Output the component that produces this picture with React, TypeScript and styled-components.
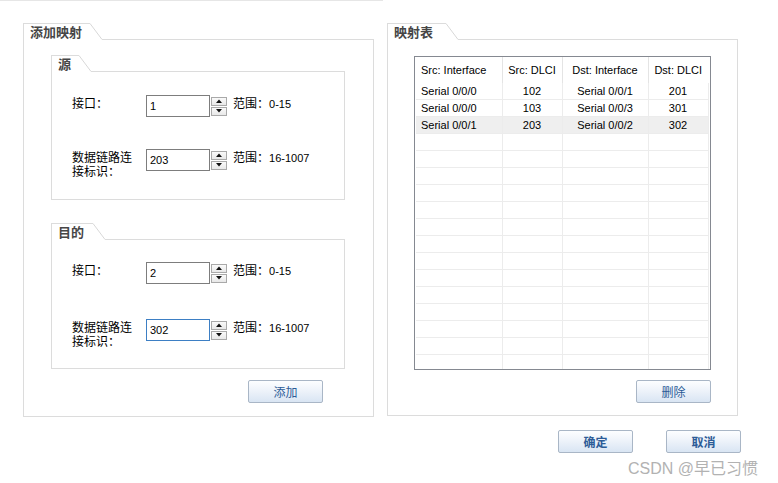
import React from 'react';
import styled, { createGlobalStyle } from 'styled-components';

const GlobalStyle = createGlobalStyle`
	html, body {
		margin: 0;
		padding: 0;
		background: #ffffff;
	}
	body {
		width: 778px;
		height: 483px;
		overflow: hidden;
		font-family: "Liberation Sans", "Noto Sans CJK SC", sans-serif;
		font-size: 12px;
		color: #000;
	}
`;

const cjk = `"Liberation Sans", "Noto Sans CJK SC", sans-serif`;

const Page = styled.div`
	position: relative;
	width: 778px;
	height: 483px;
`;

const TopRule = styled.div`
	width: 383px;
	height: 1px;
	background: #e6e6e6;
`;

const Panels = styled.div`
	display: flex;
	align-items: flex-start;
	gap: 13px;
	margin: 22px 0 0 23px;
`;

/* ---------- tabbed group box ---------- */

const GroupWrap = styled.div<{ $width: number }>`
	width: ${p => p.$width}px;
	display: flex;
	flex-direction: column;
`;

const GroupHead = styled.div`
	display: flex;
	height: 17px;
`;

const Tab = styled.div<{ $pr: number }>`
	box-sizing: border-box;
	height: 17px;
	padding: 1px ${p => p.$pr}px 0 6px;
	border-top: 1px solid #dcdcdc;
	border-left: 1px solid #dcdcdc;
	font-family: ${cjk};
	font-weight: bold;
	font-size: 13px;
	line-height: 15px;
	color: #464646;
	white-space: nowrap;
`;

const Slant = styled.svg`
	flex: none;
	display: block;
`;

const HeadFill = styled.div`
	flex: 1;
	border-bottom: 1px solid #dcdcdc;
`;

const GroupBody = styled.div<{ $pad: string }>`
	border: 1px solid #dcdcdc;
	border-top: none;
	padding: ${p => p.$pad};
	display: flex;
	flex-direction: column;
`;

const Group: React.FC<{
	title: string;
	width: number;
	pr?: number;
	pad: string;
	children: React.ReactNode;
}> = ({ title, width, pr = 8, pad, children }) => (
	<GroupWrap $width={width}>
		<GroupHead>
			<Tab $pr={pr}>{title}</Tab>
			<Slant width="12" height="17" viewBox="0 0 12 17">
				<line x1="0" y1="0.5" x2="12" y2="16.5" stroke="#d8d8d8" strokeWidth="1" />
			</Slant>
			<HeadFill />
		</GroupHead>
		<GroupBody $pad={pad}>{children}</GroupBody>
	</GroupWrap>
);

/* ---------- form rows ---------- */

const FieldRow = styled.div<{ $mt: number }>`
	display: flex;
	align-items: flex-start;
	margin-top: ${p => p.$mt}px;
`;

const Label = styled.div`
	width: 64px;
	margin-right: 10px;
	padding-top: 2px;
	font-family: ${cjk};
	font-size: 12px;
	line-height: 14px;
	color: #000;
`;

const Spin = styled.div`
	display: flex;
	gap: 1px;
`;

const Input = styled.div<{ $focus?: boolean }>`
	box-sizing: border-box;
	width: 64px;
	height: 22px;
	border: 1px solid ${p => (p.$focus ? '#3d7fc4' : '#7d7d7d')};
	padding: 0 3px;
	font-family: "Liberation Sans", sans-serif;
	font-size: 11px;
	line-height: 20px;
	background: #fff;
`;

const Arrows = styled.div`
	display: flex;
	flex-direction: column;
	justify-content: center;
	gap: 1px;
	width: 16px;
	height: 22px;
`;

const ArrowBtn = styled.div`
	box-sizing: border-box;
	width: 16px;
	height: 9px;
	border: 1px solid #a9a9a9;
	background: linear-gradient(#fafafa, #e8e8e8);
	display: flex;
	align-items: center;
	justify-content: center;
`;

const Range = styled.div`
	margin-left: 6px;
	padding-top: 2px;
	font-family: ${cjk};
	font-size: 12px;
	line-height: 14px;
	white-space: nowrap;
`;

const Num = styled.span`
	font-family: "Liberation Sans", sans-serif;
	font-size: 11px;
`;

const Tri: React.FC<{ up?: boolean }> = ({ up }) => (
	<svg width="6" height="4" viewBox="0 0 6 4">
		<polygon points={up ? '0,4 6,4 3,0.5' : '0,0 6,0 3,3.5'} fill="#111" />
	</svg>
);

const Field: React.FC<{
	label: string;
	value: string;
	range: string;
	focus?: boolean;
	mt: number;
}> = ({ label, value, range, focus, mt }) => (
	<FieldRow $mt={mt}>
		<Label>{label}</Label>
		<Spin>
			<Input $focus={focus}>{value}</Input>
			<Arrows>
				<ArrowBtn>
					<Tri up />
				</ArrowBtn>
				<ArrowBtn>
					<Tri />
				</ArrowBtn>
			</Arrows>
		</Spin>
		<Range>
			范围：<Num>{range}</Num>
		</Range>
	</FieldRow>
);

/* ---------- buttons ---------- */

const Button = styled.button<{ $bold?: boolean }>`
	box-sizing: border-box;
	width: 75px;
	height: 23px;
	padding: 0;
	border: 1px solid #a9b6c6;
	border-radius: 2px;
	background: linear-gradient(#fdfeff 0%, #eef3fa 45%, #d9e5f3 100%);
	color: #2d5c97;
	font-family: ${cjk};
	font-size: 12px;
	font-weight: ${p => (p.$bold ? 'bold' : 'normal')};
	cursor: pointer;
`;

const ButtonRow = styled.div<{ $mt: number; $mr: number }>`
	display: flex;
	justify-content: flex-end;
	margin-top: ${p => p.$mt}px;
	margin-right: ${p => p.$mr}px;
`;

const Spacer = styled.div<{ $h: number }>`
	height: ${p => p.$h}px;
	flex: none;
`;

const Footer = styled.div`
	display: flex;
	justify-content: flex-end;
	gap: 33px;
	margin: 13px 37px 0 0;
`;

/* ---------- map table ---------- */

const Grid = styled.div`
	box-sizing: border-box;
	width: 297px;
	height: 314px;
	border: 1px solid #858991;
	padding: 0 2px 0 1px;
	overflow: hidden;
	background: #fff;
`;

const Table = styled.table`
	border-collapse: collapse;
	table-layout: fixed;
	width: 292px;
	font-family: "Liberation Sans", sans-serif;
	font-size: 11px;
`;

const Th = styled.th<{ $left?: boolean }>`
	height: 26px;
	padding: 0 0 0 ${p => (p.$left ? '5px' : '0')};
	font-weight: normal;
	text-align: ${p => (p.$left ? 'left' : 'center')};
	border-right: 1px solid #e4e4e4;
	white-space: nowrap;
	&:last-child {
		border-right: none;
	}
`;

const Tr = styled.tr<{ $sel?: boolean }>`
	background: ${p => (p.$sel ? '#efefef' : 'transparent')};
`;

const Td = styled.td<{ $left?: boolean }>`
	height: 16px;
	padding: 0 0 0 ${p => (p.$left ? '5px' : '0')};
	text-align: ${p => (p.$left ? 'left' : 'center')};
	border-right: 1px solid #ececec;
	border-bottom: 1px solid #ececec;
	white-space: nowrap;
	line-height: 16px;
`;

const Watermark = styled.div`
	position: absolute;
	left: 628px;
	top: 455px;
	font-family: "Liberation Sans", "Noto Sans CJK SC", sans-serif;
	font-size: 16px;
	color: #b2b2b2;
	white-space: nowrap;
`;

const rows = [
	['Serial 0/0/0', '102', 'Serial 0/0/1', '201'],
	['Serial 0/0/0', '103', 'Serial 0/0/3', '301'],
	['Serial 0/0/1', '203', 'Serial 0/0/2', '302'],
];

const App: React.FC = () => {
	const empty = Array.from({ length: 15 });
	return (
		<Page>
			<GlobalStyle />
			<TopRule />
			<Panels>
				<Group title="添加映射" width={351} pad="15px 28px 0 27px">
					<Group title="源" width={294} pad="23px 0 20px 20px">
						<Field label="接口：" value="1" range="0-15" mt={0} />
						<Field label="数据链路连接标识：" value="203" range="16-1007" mt={32} />
					</Group>
					<Spacer $h={23} />
					<Group title="目的" width={294} pr={9} pad="22px 0 19px 20px">
						<Field label="接口：" value="2" range="0-15" mt={0} />
						<Field label="数据链路连接标识：" value="302" range="16-1007" focus mt={35} />
					</Group>
					<ButtonRow $mt={11} $mr={22}>
						<Button>添加</Button>
					</ButtonRow>
					<Spacer $h={13} />
				</Group>
				<Group title="映射表" width={351} pr={13} pad="16px 26px 12px 26px">
					<Grid>
						<Table>
							<colgroup>
								<col style={{ width: 86 }} />
								<col style={{ width: 60 }} />
								<col style={{ width: 86 }} />
								<col style={{ width: 60 }} />
							</colgroup>
							<thead>
								<tr>
									<Th $left>Src: Interface</Th>
									<Th>Src: DLCI</Th>
									<Th>Dst: Interface</Th>
									<Th>Dst: DLCI</Th>
								</tr>
							</thead>
							<tbody>
								{rows.map((r, i) => (
									<Tr key={i} $sel={i === 2}>
										<Td $left>{r[0]}</Td>
										<Td>{r[1]}</Td>
										<Td>{r[2]}</Td>
										<Td>{r[3]}</Td>
									</Tr>
								))}
								{empty.map((_, i) => (
									<Tr key={'e' + i}>
										<Td />
										<Td />
										<Td />
										<Td />
									</Tr>
								))}
							</tbody>
						</Table>
					</Grid>
					<ButtonRow $mt={10} $mr={0}>
						<Button>删除</Button>
					</ButtonRow>
				</Group>
			</Panels>
			<Footer>
				<Button $bold>确定</Button>
				<Button $bold>取消</Button>
			</Footer>
			<Watermark>CSDN @早已习惯</Watermark>
		</Page>
	);
};

export default App;
